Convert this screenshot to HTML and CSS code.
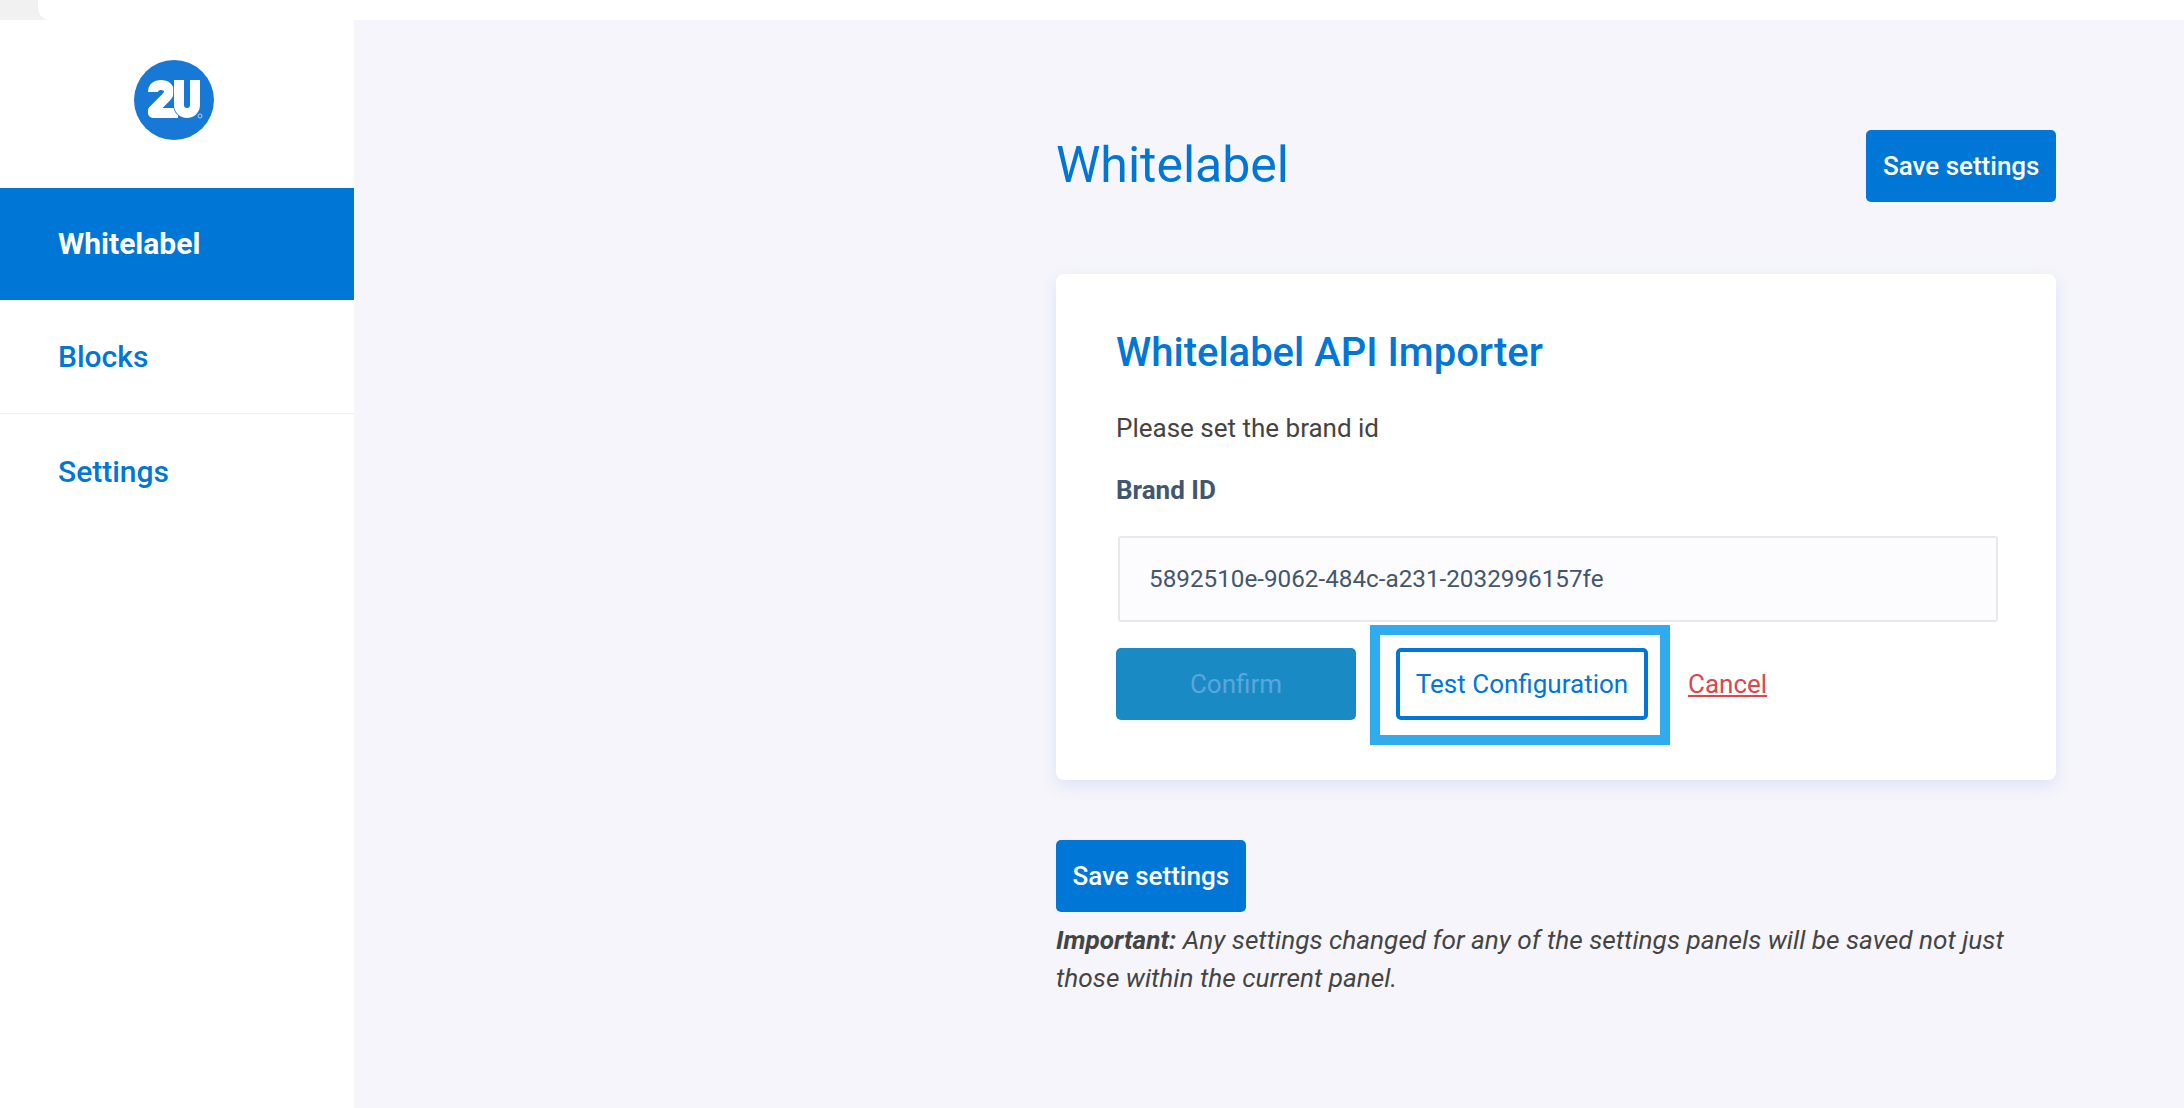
FILE: index.html
```html
<!DOCTYPE html>
<html lang="en">

<head>
    <meta charset="UTF-8">
    <meta name="viewport" content="width=device-width, initial-scale=1.0">
    <title>Whitelabel</title>
    <link rel="stylesheet" href="styles.css">
</head>

<body>
    <div class="topbar">
        <div class="topbar-tab"></div>
        <div class="topbar-fill"></div>
    </div>
    <div class="layout">
        <div class="sidebar">
            <div class="logo">
                <svg width="80" height="80" viewBox="0 0 80 80">
                    <circle cx="40" cy="40" r="40" fill="#1778d6" />
                    <path d="M19 32C19 27.500 22 25 27 25C32 25 35 27.500 35 31.500C35 34 33.500 36 31.500 38L19 50.500V53H44"
                        fill="none" stroke="#fff" stroke-width="10" stroke-linejoin="round" />
                    <path d="M45 20V45a8 8 0 0 0 16 0V20" fill="none" stroke="#1778d6" stroke-width="11.500" />
                    <path d="M45 20V45a8 8 0 0 0 16 0V20" fill="none" stroke="#fff" stroke-width="10" />
                    <circle cx="66" cy="56" r="2" fill="none" stroke="#cfe3f7" stroke-width="0.8" />
                </svg>
            </div>
            <div class="nav-item active">Whitelabel</div>
            <div class="nav-item line">Blocks</div>
            <div class="nav-item">Settings</div>
        </div>
        <div class="main">
            <div class="head">
                <h1>Whitelabel</h1>
                <button class="btn">Save settings</button>
            </div>
            <div class="card">
                <h2>Whitelabel API Importer</h2>
                <p class="intro">Please set the brand id</p>
                <label class="field-label" for="brand">Brand ID</label>
                <input class="field" id="brand" type="text" value="5892510e-9062-484c-a231-2032996157fe">
                <div class="actions">
                    <button class="btn confirm">Confirm</button>
                    <div class="test-wrap">
                        <span class="highlight"></span>
                        <button class="btn test">Test Configuration</button>
                    </div>
                    <a class="cancel" href="#">Cancel</a>
                </div>
            </div>
            <button class="btn">Save settings</button>
            <p class="note"><b>Important:</b> Any settings changed for any of the settings panels will be saved not just those within the current panel.</p>
        </div>
    </div>
</body>

</html>
```

FILE: styles.css
```css
* {
    box-sizing: border-box;
}

body {
    margin: 0;
    height: 1108px;
    overflow: hidden;
    background-color: #f5f5fb;
    font-family: Roboto, "Liberation Sans", sans-serif;
    font-size: 26px;
    color: #444;
}

.topbar {
    display: flex;
    height: 20px;
    background-color: #fff;
}

.topbar-tab {
    width: 48px;
    background-color: #f1f1f1;
}

.topbar-fill {
    flex: 1;
    margin-left: -10px;
    background-color: #fff;
    border-bottom-left-radius: 12px;
}

.layout {
    display: flex;
    height: 1088px;
}

.sidebar {
    width: 354px;
    background-color: #fff;
}

.logo {
    display: flex;
    justify-content: center;
    height: 168px;
    padding-top: 40px;
    padding-right: 6px;
    border-bottom: 1px solid #f8f8fa;
}

.nav-item {
    display: flex;
    align-items: center;
    height: 114px;
    padding-left: 58px;
    font-size: 30px;
    font-weight: 500;
    color: #0077d6;
}

.nav-item.active {
    height: 112px;
    padding-bottom: 2px;
    background-color: #0077d6;
    color: #fff;
    font-weight: 700;
}

.nav-item.line {
    border-bottom: 1px solid #eeeef3;
}

.main {
    width: 1000px;
    margin-left: 702px;
    padding-top: 110px;
}

.head {
    display: flex;
    justify-content: space-between;
    align-items: center;
    margin-bottom: 72px;
}

h1 {
    margin: 0 0 2px;
    font-size: 50px;
    font-weight: 400;
    color: #0077d6;
}

.btn {
    height: 72px;
    padding: 0 16.5px;
    border: none;
    border-radius: 5px;
    background-color: #0077d6;
    color: #fff;
    font-family: inherit;
    font-size: 26px;
    font-weight: 500;
}

.card {
    height: 506px;
    margin-bottom: 60px;
    padding: 55px 60px 0;
    background-color: #fff;
    border-radius: 8px;
    box-shadow: 0 6px 16px rgba(60, 110, 220, 0.12);
}

h2 {
    margin: 0 0 35px;
    font-size: 40px;
    line-height: 48px;
    font-weight: 500;
    color: #0077d6;
}

.intro {
    margin: 0 0 30px;
    line-height: 32px;
    color: #444;
}

.field-label {
    display: block;
    margin-bottom: 30px;
    line-height: 32px;
    font-weight: 700;
    color: #43566e;
}

.field {
    display: block;
    width: 880px;
    height: 86px;
    margin-left: 2px;
    padding: 0 29px;
    border: 2px solid #e6e8ec;
    border-radius: 3px;
    background-color: #fcfcfe;
    font-family: inherit;
    font-size: 24.25px;
    color: #43566e;
}

.actions {
    display: flex;
    align-items: center;
    margin-top: 26px;
}

.btn.confirm {
    width: 240px;
    background-color: #1a8ac4;
    color: #5aa6dd;
    font-weight: 400;
}

.test-wrap {
    position: relative;
    margin-left: 40px;
}

.btn.test {
    position: relative;
    display: block;
    width: 252px;
    padding: 0;
    background-color: #fff;
    border: 4px solid #0077d6;
    color: #0077d6;
    font-weight: 400;
}

.highlight {
    position: absolute;
    top: -23px;
    left: -26px;
    width: 300px;
    height: 120px;
    border: 10px solid #30acee;
}

.cancel {
    margin-left: 40px;
    color: #d9484f;
}

.note {
    margin: 9px 0 0;
    font-size: 26.2px;
    line-height: 38px;
    font-style: italic;
    color: #444;
}

.note b {
    font-weight: 700;
}
```
